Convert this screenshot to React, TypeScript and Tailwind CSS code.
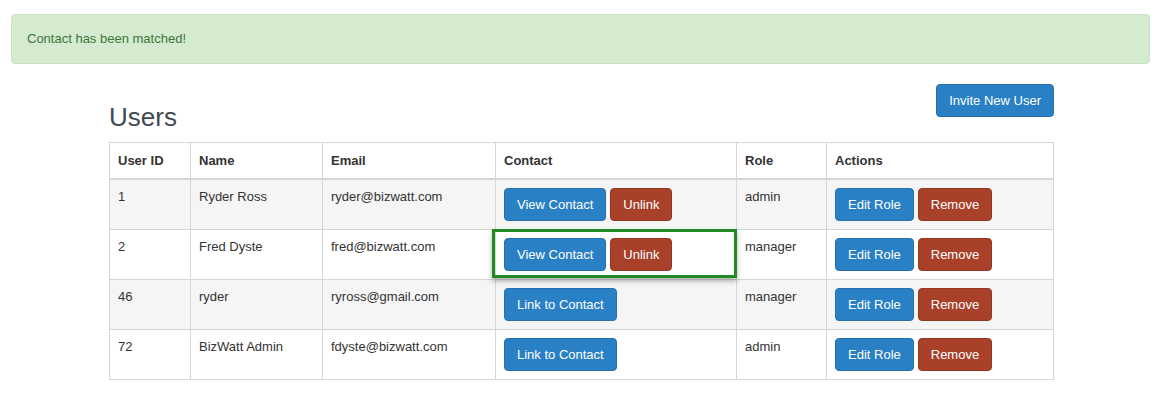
type User = {
  id: number;
  name: string;
  email: string;
  linked: boolean;
  role: string;
};

const users: User[] = [
  { id: 1, name: "Ryder Ross", email: "ryder@bizwatt.com", linked: true, role: "admin" },
  { id: 2, name: "Fred Dyste", email: "fred@bizwatt.com", linked: true, role: "manager" },
  { id: 46, name: "ryder", email: "ryross@gmail.com", linked: false, role: "manager" },
  { id: 72, name: "BizWatt Admin", email: "fdyste@bizwatt.com", linked: false, role: "admin" },
];

const blueBtn =
  "h-[33px] px-[12px] rounded-[4px] border border-[#2670ad] bg-[#2a80c5] text-white text-[13px] leading-[18px]";
const redBtn =
  "h-[33px] px-[12px] rounded-[4px] border border-[#963720] bg-[#a9402a] text-white text-[13px] leading-[18px]";

const th = "border border-[#d6d6d6] border-b-2 px-[8px] pt-[9px] pb-[8px] text-left font-bold leading-[18px] align-top";
const td = "border border-[#d6d6d6] px-[8px] py-[8px] leading-[18px] align-top";

export default function App() {
  return (
    <div
      className="min-h-[396px] bg-white text-[13px] text-[#333]"
      style={{ fontFamily: '"Liberation Sans", Arial, sans-serif' }}
    >
      <div className="mx-[11px] pt-[14px]">
        <div className="rounded-[4px] border border-[#c8e3bd] bg-[#d5ebcf] px-[15px] py-[15px] leading-[18px] text-[#3c763d]">
          Contact has been matched!
        </div>
      </div>

      <div className="ml-[109px] w-[945px]">
        <div className="mt-[20px] flex items-start justify-between">
          <h1 className="mt-[19px] text-[26px] leading-[29px] text-[#3f4953]">Users</h1>
          <button className={blueBtn}>Invite New User</button>
        </div>

        <table className="mt-[10px] w-full border-collapse">
          <colgroup>
            <col className="w-[81px]" />
            <col className="w-[132px]" />
            <col className="w-[173px]" />
            <col className="w-[241px]" />
            <col className="w-[90px]" />
            <col />
          </colgroup>
          <thead>
            <tr>
              <th className={th}>User ID</th>
              <th className={th}>Name</th>
              <th className={th}>Email</th>
              <th className={th}>Contact</th>
              <th className={th}>Role</th>
              <th className={th}>Actions</th>
            </tr>
          </thead>
          <tbody>
            {users.map((u, i) => (
              <tr key={u.id} className={i % 2 === 0 ? "bg-[#f5f5f5]" : "bg-white"}>
                <td className={td}>{u.id}</td>
                <td className={td}>{u.name}</td>
                <td className={td}>{u.email}</td>
                <td className={`${td} relative`}>
                  <div className="flex gap-[4px]">
                    {u.linked ? (
                      <>
                        <button className={blueBtn}>View Contact</button>
                        <button className={redBtn}>Unlink</button>
                      </>
                    ) : (
                      <button className={blueBtn}>Link to Contact</button>
                    )}
                  </div>
                  {u.id === 2 && (
                    <div className="pointer-events-none absolute -left-[4px] -right-[1px] -top-[1px] bottom-[1px] border-[3px] border-[#1f8a22] shadow-[0_3px_5px_rgba(0,0,0,0.3)]" />
                  )}
                </td>
                <td className={td}>{u.role}</td>
                <td className={td}>
                  <div className="flex gap-[4px]">
                    <button className={blueBtn}>Edit Role</button>
                    <button className={redBtn}>Remove</button>
                  </div>
                </td>
              </tr>
            ))}
          </tbody>
        </table>
      </div>
    </div>
  );
}
